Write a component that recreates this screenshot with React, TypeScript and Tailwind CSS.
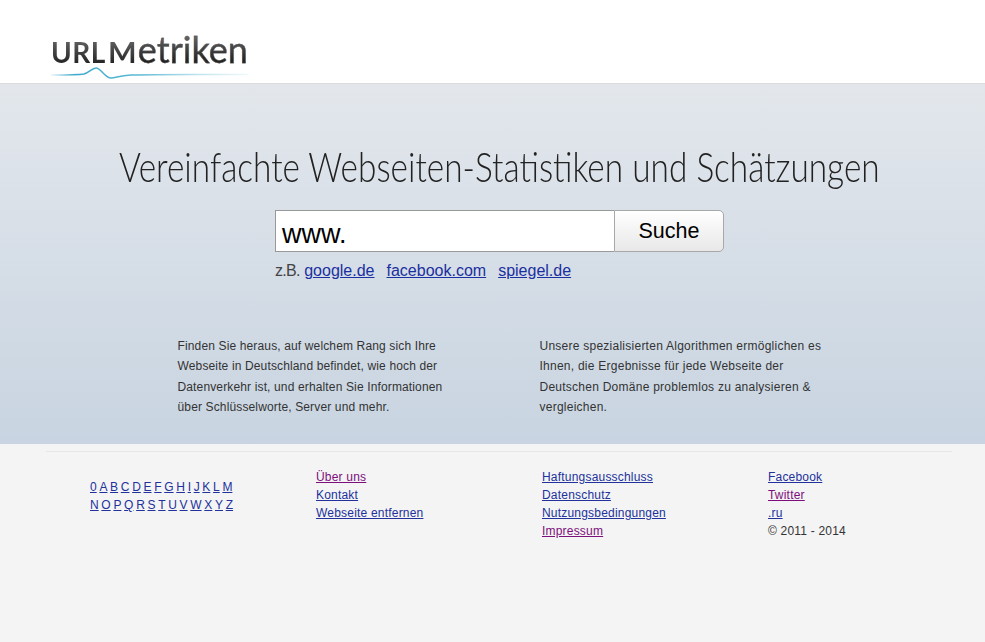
const letters1 = ["0", "A", "B", "C", "D", "E", "F", "G", "H", "I", "J", "K", "L", "M"];
const letters2 = ["N", "O", "P", "Q", "R", "S", "T", "U", "V", "W", "X", "Y", "Z"];

function FooterLink({ label, visited }: { label: string; visited?: boolean }) {
  return (
    <a href="#" className={visited ? "block underline text-[#7d0f7d]" : "block underline text-[#22319c]"}>
      {label}
    </a>
  );
}

function Logo() {
  return (
    <div className="relative h-[46px] w-[210px]">
      <div className="flex items-baseline font-['Lato',sans-serif] leading-[40px] whitespace-nowrap">
        <span className="text-[28px] font-bold tracking-[0.5px] pr-[2px] bg-gradient-to-b from-[#7a7a7a] to-[#111111] bg-clip-text text-transparent">URL</span>
        <span className="inline-block w-[30px] origin-left scale-x-[1.08] text-[28px] font-bold bg-gradient-to-b from-[#7a7a7a] to-[#111111] bg-clip-text text-transparent">M</span>
        <span className="text-[36px] [-webkit-text-stroke:0.3px_#555555] bg-gradient-to-b from-[#7a7a7a] to-[#111111] bg-clip-text text-transparent">etriken</span>
      </div>
      <svg className="absolute left-0 top-[36px]" width="198" height="16" viewBox="0 0 198 16" fill="none">
        <defs>
          <linearGradient id="wave" x1="0" y1="0" x2="198" y2="0" gradientUnits="userSpaceOnUse">
            <stop offset="0" stopColor="#3aa9cc" stopOpacity="0.1" />
            <stop offset="0.12" stopColor="#3aa9cc" />
            <stop offset="0.45" stopColor="#5dbad6" />
            <stop offset="1" stopColor="#b5dfea" stopOpacity="0.2" />
          </linearGradient>
        </defs>
        <path
          d="M0 10 C14 10 26 10 33 9 C38 8 41 3 45 3 C50 3 54 13 60 13 C65 13 68 10.5 80 10 C110 9 150 9.5 197 9.5"
          stroke="url(#wave)"
          strokeWidth="1.5"
          strokeLinecap="round"
        />
      </svg>
    </div>
  );
}

export default function App() {
  return (
    <div className="min-h-[642px] bg-[#f4f4f4] font-['Liberation_Sans',Arial,sans-serif]">
      <header className="h-[84px] bg-white border-b border-[#dcdcdc] pl-[51px] pt-[29px]">
        <Logo />
      </header>

      <section className="h-[360px] bg-gradient-to-b from-[#e3e7ec] to-[#c8d4e1] flex flex-col items-center pt-[57px] pl-[14px]">
        <h1 className="font-['Lato',sans-serif] font-light text-[42px] leading-[50px] text-[#222222] whitespace-nowrap scale-x-[0.795]">
          Vereinfachte Webseiten-Statistiken und Schätzungen
        </h1>

        <div className="mt-[19px] w-[449px]">
          <div className="flex h-[42px]">
            <div className="w-[339px] bg-white border border-[#999999] border-r-0 pl-[6px] pt-[3px] text-[27px] leading-[40px] text-black">
              www.
            </div>
            <button className="w-[110px] rounded-r-[5px] border border-[#a8a8a8] bg-gradient-to-b from-white to-[#e8e8e8] text-[21.5px] text-black">
              Suche
            </button>
          </div>
          <div className="mt-[9px] flex gap-[12px] text-[16px] leading-[20px] text-[#444444]">
            <span>
              <span className="tracking-[-0.7px]">z.B.</span>{" "}
              <a href="#" className="underline text-[#1a2fa0]">google.de</a>
            </span>
            <a href="#" className="underline text-[#1a2fa0]">facebook.com</a>
            <a href="#" className="underline text-[#1a2fa0]">spiegel.de</a>
          </div>
        </div>

        <div className="mt-[55px] flex w-[644px] text-[12px] leading-[20.33px] text-[#333333]">
          <p className="w-[362px] tracking-[0.14px]">
            Finden Sie heraus, auf welchem Rang sich Ihre<br />
            Webseite in Deutschland befindet, wie hoch der<br />
            Datenverkehr ist, und erhalten Sie Informationen<br />
            über Schlüsselworte, Server und mehr.
          </p>
          <p className="whitespace-nowrap tracking-[0.25px]">
            Unsere spezialisierten Algorithmen ermöglichen es<br />
            Ihnen, die Ergebnisse für jede Webseite der<br />
            Deutschen Domäne problemlos zu analysieren &amp;<br />
            vergleichen.
          </p>
        </div>
      </section>

      <footer className="mx-[46px] mr-[33px] border-t border-[#e6e6e6] mt-[7px] pt-[16px] text-[12px] leading-[18px] tracking-[0.2px] grid grid-cols-[270px_226px_226px_1fr]">
        <div className="pl-[44px] pt-[10px] tracking-normal">
          <div className="flex gap-[2.7px]">
            {letters1.map((l) => (
              <a key={l} href="#" className="underline text-[#22319c]">{l}</a>
            ))}
          </div>
          <div className="flex gap-[2.7px]">
            {letters2.map((l) => (
              <a key={l} href="#" className="underline text-[#22319c]">{l}</a>
            ))}
          </div>
        </div>
        <div>
          <FooterLink label="Über uns" visited />
          <FooterLink label="Kontakt" />
          <FooterLink label="Webseite entfernen" />
        </div>
        <div>
          <FooterLink label="Haftungsausschluss" />
          <FooterLink label="Datenschutz" />
          <FooterLink label="Nutzungsbedingungen" />
          <FooterLink label="Impressum" visited />
        </div>
        <div>
          <FooterLink label="Facebook" />
          <FooterLink label="Twitter" visited />
          <FooterLink label=".ru" />
          <p className="text-[#333333]">© 2011 - 2014</p>
        </div>
      </footer>
    </div>
  );
}
